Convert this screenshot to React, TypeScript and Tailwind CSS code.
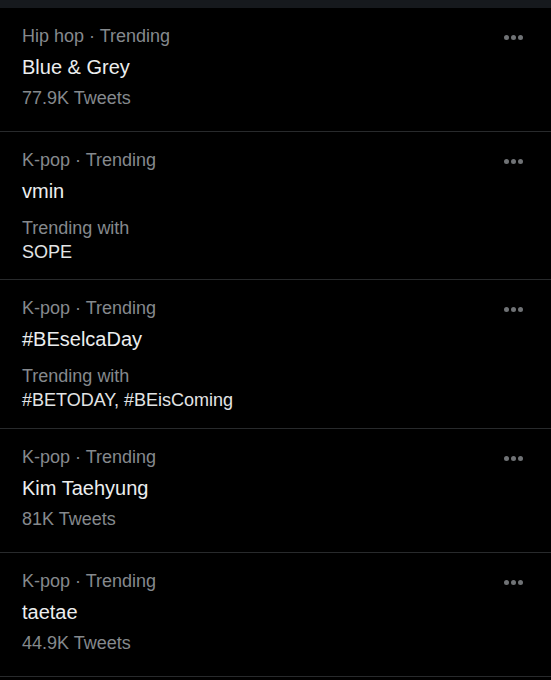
import { Fragment } from 'react';

interface Trend {
  category: string;
  title: string;
  tweets?: string;
  trendingWith?: string;
  pb: string;
}

const trends: Trend[] = [
  { category: 'Hip hop · Trending', title: 'Blue & Grey', tweets: '77.9K Tweets', pb: 'pb-[21px]' },
  { category: 'K-pop · Trending', title: 'vmin', trendingWith: 'SOPE', pb: 'pb-[15px]' },
  { category: 'K-pop · Trending', title: '#BEselcaDay', trendingWith: '#BETODAY, #BEisComing', pb: 'pb-[16px]' },
  { category: 'K-pop · Trending', title: 'Kim Taehyung', tweets: '81K Tweets', pb: 'pb-[21px]' },
  { category: 'K-pop · Trending', title: 'taetae', tweets: '44.9K Tweets', pb: 'pb-[21px]' },
];

export default function App() {
  return (
    <div
      className="w-[551px] h-[680px] bg-black overflow-hidden"
      style={{ fontFamily: '"Liberation Sans", Arial, sans-serif' }}
    >
      <div className="h-[8px] bg-[#16191d]" />
      {trends.map((t, i) => (
        <Fragment key={i}>
          <TrendRow trend={t} />
          <div className="h-px bg-[#282a2c]" />
        </Fragment>
      ))}
    </div>
  );
}

function TrendRow({ trend }: { trend: Trend }) {
  return (
    <div className={`relative pl-[22px] pr-6 pt-[16px] ${trend.pb}`}>
      <div className="text-[18px] leading-[24px] text-[#85898d]">{trend.category}</div>
      <div className="text-[20px] leading-[38px] text-[#eceeef]">{trend.title}</div>
      {trend.tweets && (
        <div className="text-[18px] leading-[24px] text-[#85898d]">{trend.tweets}</div>
      )}
      {trend.trendingWith && (
        <div className="mt-[6px]">
          <div className="text-[18px] leading-[24px] text-[#85898d]">Trending with</div>
          <div className="text-[18px] leading-[24px] text-[#e2e4e5]">{trend.trendingWith}</div>
        </div>
      )}
      {/* more menu */}
      <div className="absolute top-[27px] left-[504px] flex gap-[2px]">
        <span className="w-[5px] h-[5px] rounded-full bg-[#6f7275]" />
        <span className="w-[5px] h-[5px] rounded-full bg-[#6f7275]" />
        <span className="w-[5px] h-[5px] rounded-full bg-[#6f7275]" />
      </div>
    </div>
  );
}
